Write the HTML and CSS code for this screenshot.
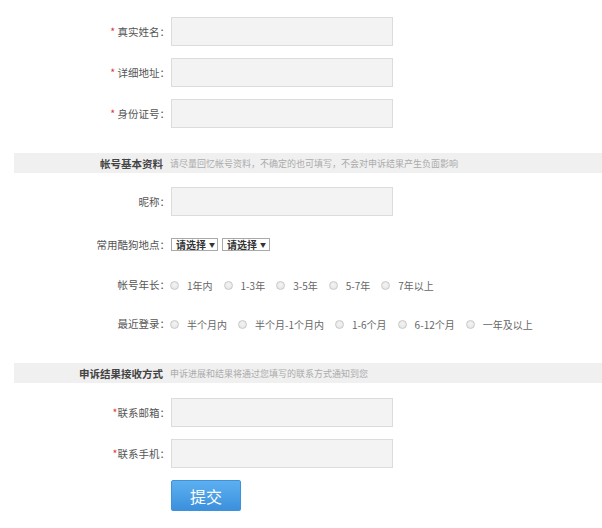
FILE: index.html
```html
<!DOCTYPE html>
<html lang="zh-CN">
<head>
<meta charset="utf-8">
<title>申诉表单</title>
<link rel="stylesheet" href="styles.css">
</head>
<body>
<form class="form">
  <div class="row row-first">
    <label class="label"><span class="star">*</span> 真实姓名<span class="colon">：</span></label>
    <input class="text" type="text">
  </div>
  <div class="row row-tight">
    <label class="label"><span class="star">*</span> 详细地址<span class="colon">：</span></label>
    <input class="text" type="text">
  </div>
  <div class="row row-tight">
    <label class="label"><span class="star">*</span> 身份证号<span class="colon">：</span></label>
    <input class="text" type="text">
  </div>

  <div class="band band-1">
    <span class="band-title">帐号基本资料</span>
    <span class="band-tip">请尽量回忆帐号资料，不确定的也可填写，不会对申诉结果产生负面影响</span>
  </div>

  <div class="row row-nick">
    <label class="label">昵称<span class="colon">：</span></label>
    <input class="text" type="text">
  </div>

  <div class="row row-select">
    <label class="label">常用酷狗地点<span class="colon">：</span></label>
    <span class="select">请选择 <i class="arrow">▼</i></span>
    <span class="select select-2">请选择 <i class="arrow">▼</i></span>
  </div>

  <div class="row row-radio row-radio-1">
    <label class="label">帐号年长<span class="colon">：</span></label>
    <span class="opt"><input type="radio" name="age" class="radio"><span>1年内</span></span>
    <span class="opt"><input type="radio" name="age" class="radio"><span>1-3年</span></span>
    <span class="opt"><input type="radio" name="age" class="radio"><span>3-5年</span></span>
    <span class="opt"><input type="radio" name="age" class="radio"><span>5-7年</span></span>
    <span class="opt"><input type="radio" name="age" class="radio"><span>7年以上</span></span>
  </div>

  <div class="row row-radio row-radio-2">
    <label class="label">最近登录<span class="colon">：</span></label>
    <span class="opt"><input type="radio" name="login" class="radio"><span>半个月内</span></span>
    <span class="opt"><input type="radio" name="login" class="radio"><span>半个月-1个月内</span></span>
    <span class="opt"><input type="radio" name="login" class="radio"><span>1-6个月</span></span>
    <span class="opt"><input type="radio" name="login" class="radio"><span>6-12个月</span></span>
    <span class="opt"><input type="radio" name="login" class="radio"><span>一年及以上</span></span>
  </div>

  <div class="band band-2">
    <span class="band-title">申诉结果接收方式</span>
    <span class="band-tip">申诉进展和结果将通过您填写的联系方式通知到您</span>
  </div>

  <div class="row row-mail">
    <label class="label"><span class="star">*</span>联系邮箱<span class="colon">：</span></label>
    <input class="text" type="text">
  </div>
  <div class="row row-tight">
    <label class="label"><span class="star">*</span>联系手机<span class="colon">：</span></label>
    <input class="text" type="text">
  </div>
  <div class="row row-tight row-submit">
    <span class="label"></span>
    <button type="button" class="submit">提交</button>
  </div>
</form>
</body>
</html>
```

FILE: styles.css
```css
html, body {
  margin: 0;
  padding: 0;
  background: #ffffff;
}

body {
  font-family: "Noto Sans CJK SC", "Noto Sans", sans-serif;
  color: #555;
}

.form {
  display: flex;
  flex-direction: column;
  padding-top: 17px;
}

.row {
  display: flex;
  align-items: center;
}

.row-tight { margin-top: 12px; }
.row-nick { margin-top: 14px; }
.row-select { margin-top: 22px; height: 13px; }
.row-radio-1 { margin-top: 27px; height: 14px; }
.row-radio-2 { margin-top: 25px; height: 14px; }
.row-mail { margin-top: 15px; }

.label {
  width: 170px;
  flex: none;
  text-align: right;
  font-size: 10.5px;
  line-height: 14px;
  color: #555;
  white-space: nowrap;
}

.colon {
  font-family: "Noto Sans CJK JP", "Noto Sans CJK SC", sans-serif;
}

.star {
  color: #e0393a;
}

.text {
  width: 222px;
  height: 29px;
  box-sizing: border-box;
  margin: 0 0 0 1px;
  border: 1px solid #dcdcdc;
  background: #f3f3f3;
  outline: none;
  padding: 0 6px;
}

.band {
  display: flex;
  align-items: center;
  height: 20px;
  margin-left: 14px;
  background: #f0f0f0;
}

.band-1 { margin-top: 25px; }
.band-2 { margin-top: 32px; }

.band-title {
  width: 149px;
  flex: none;
  text-align: right;
  font-size: 10.5px;
  font-weight: bold;
  color: #444;
  white-space: nowrap;
}

.band-tip {
  margin-left: 7px;
  font-size: 9px;
  color: #ababab;
  white-space: nowrap;
}

.select {
  display: flex;
  align-items: center;
  height: 13px;
  box-sizing: border-box;
  margin-left: 1px;
  padding: 0 3px 0 4px;
  width: 47px;
  border: 1px solid #a9a9a9;
  background: #fff;
  font-size: 10px;
  font-weight: bold;
  color: #333;
  white-space: nowrap;
}

.select-2 {
  margin-left: 4px;
  width: 48px;
}

.arrow {
  font-style: normal;
  font-size: 6px;
  margin-left: 3px;
  color: #333;
}

.opt {
  display: flex;
  align-items: center;
  margin-right: 11px;
  font-size: 10px;
  color: #666;
  white-space: nowrap;
}

.radio {
  appearance: none;
  -webkit-appearance: none;
  width: 9px;
  height: 9px;
  margin: 0 8px 0 0;
  box-sizing: border-box;
  border: 1px solid #c9c9c9;
  border-radius: 50%;
  background: radial-gradient(circle at 50% 40%, #f4f4f4 0%, #e2e2e2 100%);
  flex: none;
}

.submit {
  width: 70px;
  height: 31px;
  margin-left: 1px;
  border: 1px solid #3f92d8;
  border-radius: 2px;
  background: linear-gradient(#5cb0f0, #3c90dc);
  color: #fff;
  font-family: "Noto Sans CJK SC", sans-serif;
  font-size: 16px;
  padding: 0;
  box-shadow: 0 1px 1px rgba(0, 0, 0, 0.15);
}
```
